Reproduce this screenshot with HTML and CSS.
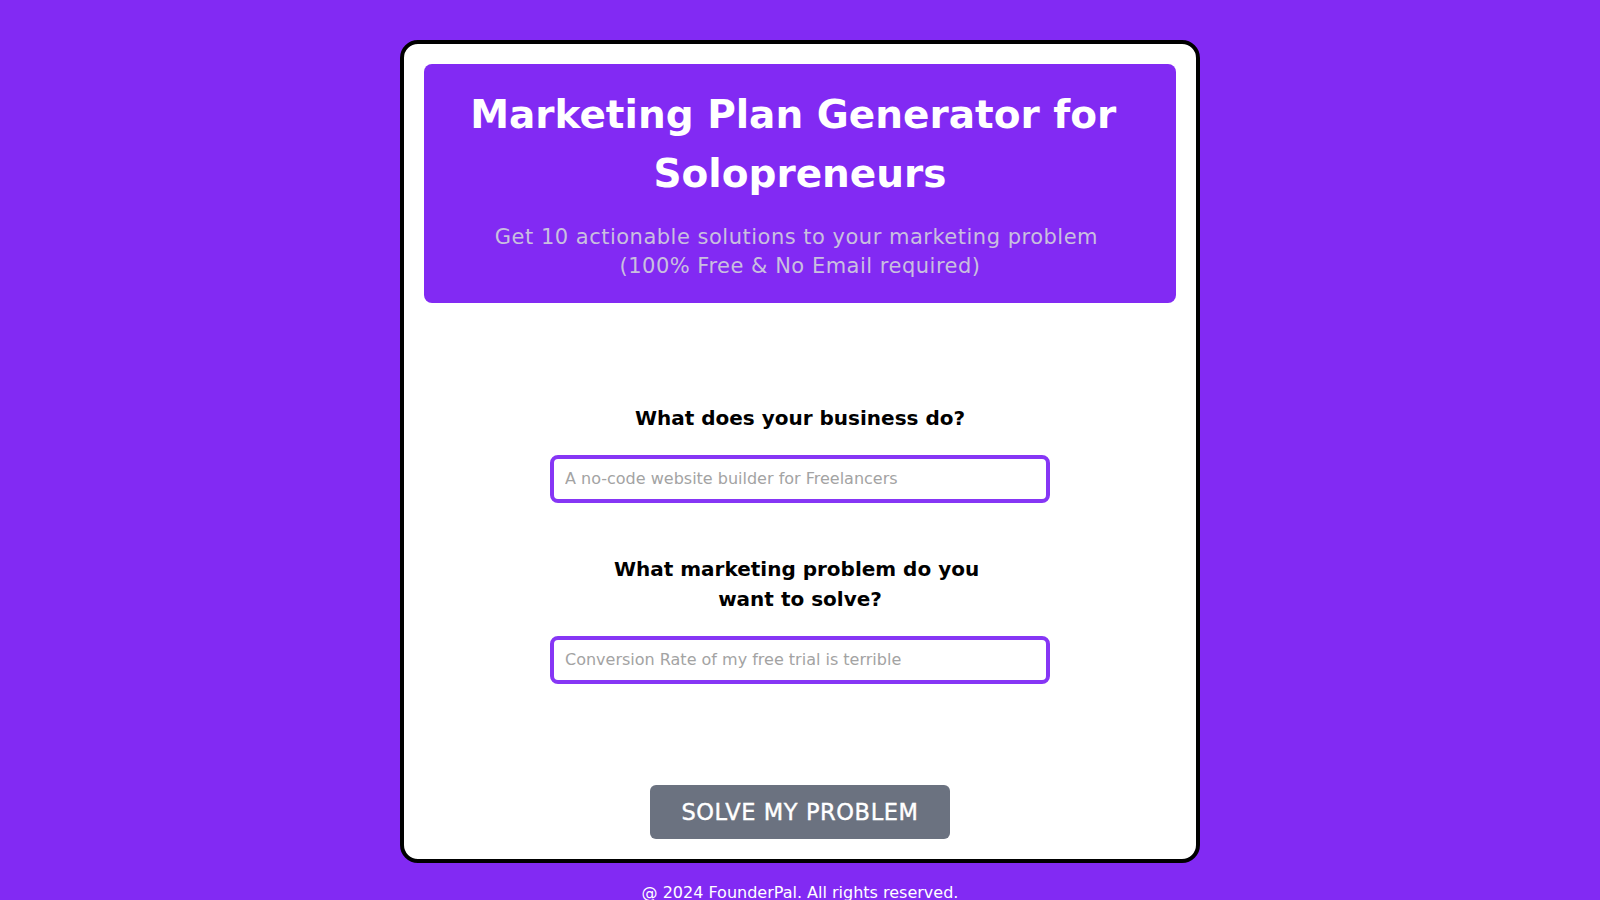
FILE: index.html
```html
<!DOCTYPE html>
<html lang="en">
<head>
<meta charset="utf-8">
<title>Marketing Plan Generator for Solopreneurs</title>
<link rel="stylesheet" href="styles.css">
</head>
<body>
<main class="card">
  <header class="hero">
    <h1 class="hero-title">Marketing Plan Generator for Solopreneurs</h1>
    <p class="hero-sub">Get 10 actionable solutions to your marketing problem <br>(100% Free &amp; No Email required)</p>
  </header>
  <form class="form">
    <div class="field">
      <label class="field-label" for="business">What does your business do?</label>
      <input class="field-input" id="business" type="text" placeholder="A no-code website builder for Freelancers">
    </div>
    <div class="field field-second">
      <label class="field-label" for="problem">What marketing problem do you want to solve?</label>
      <input class="field-input" id="problem" type="text" placeholder="Conversion Rate of my free trial is terrible">
    </div>
    <button class="submit" type="button">SOLVE MY PROBLEM</button>
  </form>
</main>
<footer class="footer">@ 2024 FounderPal. All rights reserved.</footer>
</body>
</html>
```

FILE: styles.css
```css
* {
  box-sizing: border-box;
}

html, body {
  margin: 0;
  padding: 0;
}

body {
  background: #822af3;
  font-family: "DejaVu Sans", "Liberation Sans", sans-serif;
  padding-top: 40px;
  min-height: 900px;
}

.card {
  width: 800px;
  margin: 0 auto;
  background: #ffffff;
  border: 4px solid #000000;
  border-radius: 18px;
  padding: 20px;
  display: flex;
  flex-direction: column;
  align-items: center;
}

.hero {
  width: 100%;
  background: #822af3;
  border-radius: 8px;
  padding: 21px 20px;
  text-align: center;
}

.hero-title {
  margin: 0;
  color: #ffffff;
  font-size: 39px;
  font-weight: 700;
  line-height: 59px;
  white-space: break-spaces;
}

.hero-sub {
  margin: 20px 0 0;
  color: #c9bfdf;
  font-size: 21px;
  line-height: 29.4px;
  letter-spacing: 0.5px;
  font-weight: 400;
  white-space: break-spaces;
}

.form {
  margin-top: 100px;
  display: flex;
  flex-direction: column;
  align-items: center;
  width: 100%;
}

.field {
  display: flex;
  flex-direction: column;
  align-items: center;
}

.field-second {
  margin-top: 51px;
}

.field-label {
  max-width: 400px;
  text-align: center;
  color: #000000;
  font-size: 20px;
  font-weight: 700;
  line-height: 30px;
  margin-bottom: 22px;
  white-space: break-spaces;
}

.field-input {
  width: 500px;
  height: 48px;
  border: 4px solid #8636f5;
  border-radius: 8px;
  padding: 0 11px;
  font-family: "DejaVu Sans", "Liberation Sans", sans-serif;
  font-size: 16px;
  color: #222222;
  background: #ffffff;
  outline: none;
}

.field-input::placeholder {
  color: #a3a3a3;
}

.submit {
  margin-top: 101px;
  width: 300px;
  height: 54px;
  border: none;
  border-radius: 6px;
  background: #6b7280;
  color: #ffffff;
  font-family: "DejaVu Sans", "Liberation Sans", sans-serif;
  font-size: 22.5px;
  letter-spacing: 0.6px;
  -webkit-text-stroke: 0.4px #ffffff;
  cursor: pointer;
}

.footer {
  margin-top: 18px;
  text-align: center;
  color: #ffffff;
  font-size: 16px;
  line-height: 24px;
}
```
